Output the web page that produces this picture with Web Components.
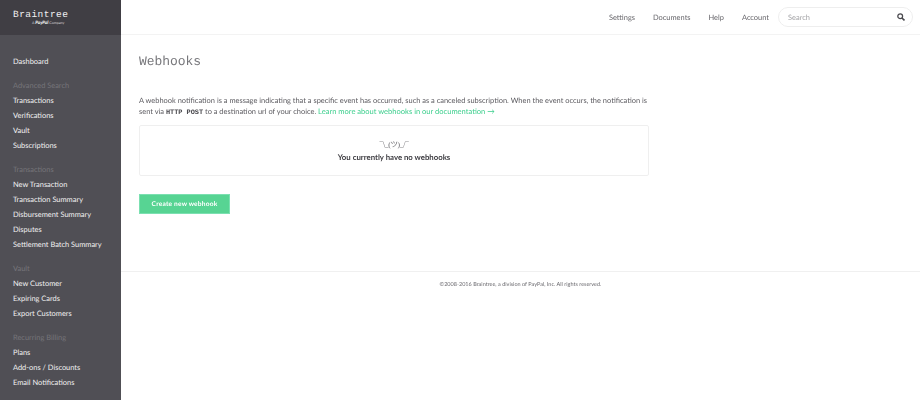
<!DOCTYPE html>
<html>
<head>
<meta charset="utf-8">
<title>Webhooks</title>
<style>
  html, body { margin: 0; height: 400px; overflow: hidden; background: #fff; }
  body { font-family: Lato, "Noto Sans", sans-serif; text-rendering: geometricPrecision; }
</style>
</head>
<body>
<bt-shell>
  <bt-sidebar slot="side"></bt-sidebar>
  <bt-topbar slot="top"></bt-topbar>
  <bt-webhooks></bt-webhooks>
  <bt-footer slot="foot"></bt-footer>
</bt-shell>

<script>
class BtShell extends HTMLElement {
  constructor() {
    super();
    this.attachShadow({ mode: 'open' });
    this.shadowRoot.innerHTML = `
      <style>
        :host { display: flex; width: 920px; height: 400px; overflow: hidden; opacity: 0.999; }
        .side { flex: 0 0 121px; }
        .main { flex: 1; min-width: 0; display: flex; flex-direction: column; }
      </style>
      <div class="side"><slot name="side"></slot></div>
      <div class="main">
        <slot name="top"></slot>
        <slot></slot>
        <slot name="foot"></slot>
      </div>
    `;
  }
}

const NAV = [
  { items: ['Dashboard'] },
  { title: 'Advanced Search', items: ['Transactions', 'Verifications', 'Vault', 'Subscriptions'] },
  { title: 'Transactions', items: ['New Transaction', 'Transaction Summary', 'Disbursement Summary', 'Disputes', 'Settlement Batch Summary'] },
  { title: 'Vault', items: ['New Customer', 'Expiring Cards', 'Export Customers'] },
  { title: 'Recurring Billing', items: ['Plans', 'Add-ons / Discounts', 'Email Notifications'] }
];

class BtSidebar extends HTMLElement {
  constructor() {
    super();
    this.attachShadow({ mode: 'open' });
    const groups = NAV.map((group) => `
      <div class="group">
        ${group.title ? `<h4>${group.title}</h4>` : ''}
        ${group.items.map((item) => `<a>${item}</a>`).join('')}
      </div>
    `).join('');
    this.shadowRoot.innerHTML = `
      <style>
        :host { display: block; width: 121px; height: 400px; background: #504f55; font-size: 7.45px; overflow: hidden; }
        .brand { height: 35px; background: #403e44; box-sizing: border-box; padding: 9px 0 0 13px; color: #f1f0f2; }
        .name { font: 9.5px/11px "Liberation Mono", monospace; letter-spacing: 0.45px; height: 11px; }
        .sub { font-size: 3.6px; line-height: 5px; margin-left: 19px; color: #d8d7da; white-space: nowrap; }
        .sub b { font-style: italic; font-size: 4.6px; color: #fff; }
        nav { padding-top: 19px; }
        .group { margin-bottom: 9px; }
        h4 { margin: 0; height: 15px; line-height: 15px; font-size: 7.45px; font-weight: 400; color: #76757a; }
        a { display: block; height: 15px; line-height: 15px; color: #f2f2f3; white-space: nowrap; }
        h4, a { padding-left: 13px; }
      </style>
      <div class="brand">
        <div class="name">Braintree</div>
        <div class="sub">A <b>PayPal</b> Company</div>
      </div>
      <nav>${groups}</nav>
    `;
  }
}

class BtTopbar extends HTMLElement {
  constructor() {
    super();
    this.attachShadow({ mode: 'open' });
    this.shadowRoot.innerHTML = `
      <style>
        :host { display: flex; align-items: center; justify-content: flex-end; height: 35px; box-sizing: border-box; border-bottom: 1px solid #f3f3f3; padding: 0 7px 0 0; font-size: 7.45px; color: #66656a; }
        a { margin-right: 18px; }
        a:first-child { margin-right: 17px; }
        a:last-of-type { margin-right: 9px; }
        .search { width: 135px; height: 20px; box-sizing: border-box; border: 1px solid #eeeeee; border-radius: 10px; display: flex; align-items: center; justify-content: space-between; padding: 0 7px 0 9px; color: #a3a3a6; }
        svg { display: block; }
      </style>
      <a>Settings</a><a>Documents</a><a>Help</a><a>Account</a>
      <div class="search">
        <span>Search</span>
        <svg width="8" height="8" viewBox="0 0 9 9" fill="none" stroke="#4a494e" stroke-width="1.4">
          <circle cx="3.6" cy="3.6" r="2.7"/><path d="M5.6 5.6L8.4 8.4" stroke-width="1.8"/>
        </svg>
      </div>
    `;
  }
}

class BtWebhooks extends HTMLElement {
  constructor() {
    super();
    this.attachShadow({ mode: 'open' });
    this.shadowRoot.innerHTML = `
      <style>
        :host { display: block; height: 237px; box-sizing: border-box; padding: 18px 0 0 18px; border-bottom: 1px solid #f0f0f0; font-size: 7.45px; color: #5b5a5f; }
        h1 { margin: 0; font: 400 13px/17px "Liberation Mono", monospace; color: #77777b; letter-spacing: -0.05px; }
        p { margin: 25px 0 0; width: 515px; line-height: 11px; height: 22px; }
        code { font: 700 6.9px "Liberation Mono", monospace; color: #48474c; }
        .link { color: #3ecf8e; font-size: 7.55px; }
        .empty { box-sizing: border-box; width: 510px; height: 51px; margin-top: 8px; border: 1px solid #efefef; border-radius: 2px; text-align: center; padding-top: 12px; color: #3d3c41; }
        .shrug { font: 7.5px/13px "Liberation Serif", "Noto Sans CJK JP", serif; letter-spacing: -0.3px; color: #5a595e; }
        .none { font-size: 7.8px; font-weight: 700; line-height: 13px; margin-top: 0; }
        button { display: block; margin-top: 18px; width: 91px; height: 20px; border: 1px solid #7be0b1; background: #57d493; color: #fff; font: 700 6.6px Lato, sans-serif; letter-spacing: 0.2px; padding: 0; text-rendering: geometricPrecision; }
      </style>
      <h1>Webhooks</h1>
      <p>A webhook notification is a message indicating that a specific event has occurred, such as a canceled subscription. When the event occurs, the notification is sent via <code>HTTP POST</code> to a destination url of your choice. <span class="link">Learn more about webhooks in our documentation →</span></p>
      <div class="empty">
        <div class="shrug">¯\\_(ツ)_/¯</div>
        <div class="none">You currently have no webhooks</div>
      </div>
      <button>Create new webhook</button>
    `;
  }
}

class BtFooter extends HTMLElement {
  constructor() {
    super();
    this.attachShadow({ mode: 'open' });
    this.shadowRoot.innerHTML = `
      <style>
        :host { display: block; padding-top: 8px; text-align: center; font-size: 5.5px; line-height: 10px; color: #6a696e; }
      </style>
      ©2008-2016 Braintree, a division of PayPal, Inc. All rights reserved.
    `;
  }
}

customElements.define('bt-shell', BtShell);
customElements.define('bt-sidebar', BtSidebar);
customElements.define('bt-topbar', BtTopbar);
customElements.define('bt-webhooks', BtWebhooks);
customElements.define('bt-footer', BtFooter);
</script>
</body>
</html>
